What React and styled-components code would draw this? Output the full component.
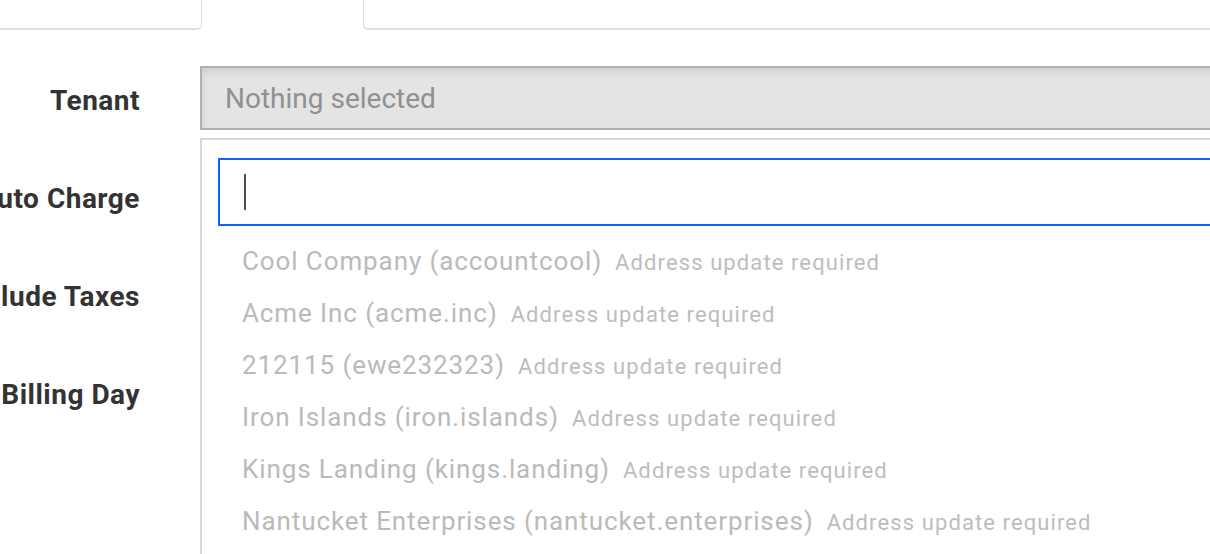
import React from "react";
import styled, { createGlobalStyle } from "styled-components";

const GlobalStyle = createGlobalStyle`
  html, body {
    margin: 0;
    padding: 0;
    background: #ffffff;
  }
  body {
    font-family: Roboto, "Liberation Sans", sans-serif;
    overflow: hidden;
  }
`;

const Page = styled.div`
  width: 1210px;
  height: 554px;
  overflow: hidden;
  background: #fff;
`;

// tab strip along the top
const Tabs = styled.div`
  display: flex;
  height: 30px;
`;

const TabGap = styled.div`
  box-sizing: border-box;
  flex: ${(p) => (p.$grow ? "1" : "none")};
  width: ${(p) => (p.$grow ? "auto" : `${p.$w}px`)};
  border-bottom: 2px solid #dedede;
  border-right: ${(p) => (p.$side === "right" ? "1px solid #dedede" : "none")};
  border-left: ${(p) => (p.$side === "left" ? "1px solid #dedede" : "none")};
  border-bottom-right-radius: ${(p) => (p.$side === "right" ? "5px" : "0")};
  border-bottom-left-radius: ${(p) => (p.$side === "left" ? "5px" : "0")};
`;

const ActiveTab = styled.div`
  width: 161px;
`;

const Form = styled.div`
  display: flex;
  flex-direction: column;
  gap: 34px;
  padding-top: 36px;
`;

const Row = styled.div`
  display: grid;
  grid-template-columns: 140px 1100px;
  column-gap: 60px;
  align-items: center;
  height: 64px;
`;

const Label = styled.div`
  display: flex;
  justify-content: flex-end;
  white-space: nowrap;
  margin-top: 4px;
  font-size: 28px;
  font-weight: 700;
  letter-spacing: 0.5px;
  color: #333333;
`;

const Control = styled.div`
  position: relative;
  height: 64px;
`;

const Select = styled.div`
  box-sizing: border-box;
  height: 64px;
  display: flex;
  align-items: center;
  padding-left: 23px;
  border: 2px solid #b1b1b1;
  background: #e4e4e4;
  box-shadow: inset 0 4px 7px rgba(0, 0, 0, 0.09);
  font-size: 28px;
  color: #909090;
`;

const Menu = styled.div`
  position: absolute;
  z-index: 5;
  top: calc(100% + 8px);
  left: 0;
  right: 0;
  box-sizing: border-box;
  height: 500px;
  padding: 18px 16px 0;
  background: #fff;
  border: 2px solid #d4d8df;
`;

const Search = styled.div`
  box-sizing: border-box;
  height: 68px;
  display: flex;
  align-items: center;
  padding-left: 24px;
  border: 2px solid #0f62fe;
  background: #fff;
`;

const Caret = styled.span`
  display: block;
  width: 2px;
  height: 36px;
  background: #4f4f4f;
`;

const Options = styled.ul`
  list-style: none;
  margin: 9px 0 0;
  padding: 0;
`;

const Option = styled.li`
  height: 52px;
  line-height: 52px;
  padding-left: 24px;
  white-space: nowrap;
`;

const OptName = styled.span`
  font-size: 26px;
  letter-spacing: 0.9px;
  color: #bababa;
`;

const OptNote = styled.span`
  margin-left: 13px;
  font-size: 22px;
  letter-spacing: 1.1px;
  color: #bdbdbd;
`;

const tenants = [
  ["Cool Company (accountcool)", "Address update required"],
  ["Acme Inc (acme.inc)", "Address update required"],
  ["212115 (ewe232323)", "Address update required"],
  ["Iron Islands (iron.islands)", "Address update required"],
  ["Kings Landing (kings.landing)", "Address update required"],
  ["Nantucket Enterprises (nantucket.enterprises)", "Address update required"],
];

export default function App() {
  return (
    <Page>
      <GlobalStyle />
      <Tabs>
        <TabGap $w={202} $side="right" />
        <ActiveTab />
        <TabGap $grow $side="left" />
      </Tabs>
      <Form>
        <Row>
          <Label>Tenant</Label>
          <Control>
            <Select>Nothing selected</Select>
            <Menu>
              <Search>
                <Caret />
              </Search>
              <Options>
                {tenants.map(([name, note]) => (
                  <Option key={name}>
                    <OptName>{name}</OptName>
                    <OptNote>{note}</OptNote>
                  </Option>
                ))}
              </Options>
            </Menu>
          </Control>
        </Row>
        <Row>
          <Label>Auto Charge</Label>
          <Control />
        </Row>
        <Row>
          <Label>Include Taxes</Label>
          <Control />
        </Row>
        <Row>
          <Label>Next Billing Day</Label>
          <Control />
        </Row>
      </Form>
    </Page>
  );
}
